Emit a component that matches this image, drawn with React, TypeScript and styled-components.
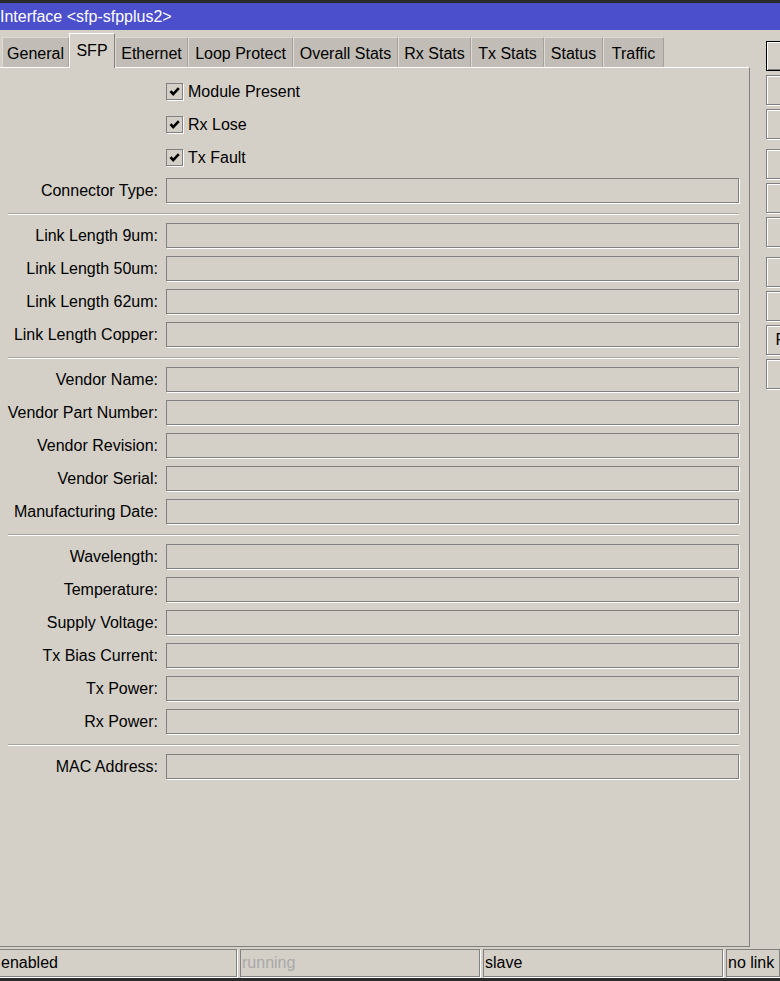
import styled, { createGlobalStyle } from 'styled-components';

const GlobalStyle = createGlobalStyle`
  html, body {
    margin: 0;
    padding: 0;
    background: #d4d0c8;
    overflow: hidden;
  }
  body {
    font-family: 'Liberation Sans', Arial, sans-serif;
    font-size: 16px;
    color: #000;
  }
`;

const tabs = [
  { name: 'General', width: 67 },
  { name: 'SFP', width: 46, active: true },
  { name: 'Ethernet', width: 73 },
  { name: 'Loop Protect', width: 105 },
  { name: 'Overall Stats', width: 105 },
  { name: 'Rx Stats', width: 73 },
  { name: 'Tx Stats', width: 73 },
  { name: 'Status', width: 59 },
  { name: 'Traffic', width: 61 },
];

const checks = ['Module Present', 'Rx Lose', 'Tx Fault'];

const sections = [
  ['Connector Type'],
  ['Link Length 9um', 'Link Length 50um', 'Link Length 62um', 'Link Length Copper'],
  ['Vendor Name', 'Vendor Part Number', 'Vendor Revision', 'Vendor Serial', 'Manufacturing Date'],
  ['Wavelength', 'Temperature', 'Supply Voltage', 'Tx Bias Current', 'Tx Power', 'Rx Power'],
  ['MAC Address'],
];

const buttonGroups = [
  ['OK', 'Cancel', 'Apply'],
  ['Disable', 'Comment', 'Torch'],
  ['Cable Test', 'Blink', 'Reset MAC Address', 'Reset Counters'],
];

const statusCells = [
  { text: 'enabled', width: 238 },
  { text: 'running', width: 240, dim: true },
  { text: 'slave', width: 240 },
  { text: 'no link' },
];

function App() {
  return (
    <Window>
      <GlobalStyle />
      <TopEdge />
      <TitleBar>Interface &lt;sfp-sfpplus2&gt;</TitleBar>
      <Body>
        <Main>
          <TabRow>
            {tabs.map((t) => (
              <Tab key={t.name} $width={t.width} $active={!!t.active}>
                {t.name}
              </Tab>
            ))}
          </TabRow>
          <Panel>
            <Form>
              {checks.map((c) => (
                <CheckRow key={c}>
                  <CheckBox>
                    <svg width="13" height="13" viewBox="0 0 13 13">
                      <path d="M2.5 6.2 L5.2 9.2 L10.8 3.2" fill="none" stroke="#000" strokeWidth="2.6" />
                    </svg>
                  </CheckBox>
                  <CheckLabel>{c}</CheckLabel>
                </CheckRow>
              ))}
              {sections.map((rows, i) => (
                <FieldGroup key={i}>
                  {i > 0 && <Separator />}
                  {rows.map((r) => (
                    <FieldRow key={r}>
                      <Label>{r}:</Label>
                      <Field />
                    </FieldRow>
                  ))}
                </FieldGroup>
              ))}
            </Form>
          </Panel>
        </Main>
        <Side>
          {buttonGroups.map((g, gi) => (
            <ButtonGroup key={gi}>
              {g.map((b, bi) => (
                <Button key={b} $default={gi === 0 && bi === 0}>
                  {b}
                </Button>
              ))}
            </ButtonGroup>
          ))}
        </Side>
      </Body>
      <StatusBar>
        {statusCells.map((s) => (
          <StatusCell key={s.text} $width={s.width} $dim={!!s.dim}>
            {s.text}
          </StatusCell>
        ))}
      </StatusBar>
      <BottomEdge />
    </Window>
  );
}

const Window = styled.div`
  width: 780px;
  height: 981px;
  display: flex;
  flex-direction: column;
  overflow: hidden;
  background: #d4d0c8;
`;

const TopEdge = styled.div`
  height: 3px;
  background: #2a2a2a;
`;

const TitleBar = styled.div`
  height: 27px;
  line-height: 27px;
  background: #4b4fcc;
  color: #fff;
  white-space: nowrap;
`;

const Body = styled.div`
  flex: 1;
  display: flex;
  min-height: 0;
`;

const Main = styled.div`
  width: 750px;
  flex: none;
  display: flex;
  flex-direction: column;
  padding-top: 3px;
  box-sizing: border-box;
`;

const TabRow = styled.div`
  height: 34px;
  display: flex;
  align-items: flex-end;
  padding-left: 2px;
`;

const Tab = styled.div<{ $width: number; $active: boolean }>`
  width: ${(p) => p.$width}px;
  flex: none;
  box-sizing: border-box;
  text-align: center;
  white-space: nowrap;
  position: relative;
  z-index: ${(p) => (p.$active ? 2 : 1)};
  height: ${(p) => (p.$active ? 35 : 30)}px;
  margin-bottom: ${(p) => (p.$active ? -1 : 0)}px;
  line-height: ${(p) => (p.$active ? 33 : 31)}px;
  background: ${(p) => (p.$active ? '#d4d0c8' : '#c1bdb6')};
  border-top: 1px solid ${(p) => (p.$active ? '#fff' : '#dedbd6')};
  border-left: 1px solid ${(p) => (p.$active ? '#fff' : '#dedbd6')};
  border-right: 1px solid ${(p) => (p.$active ? '#808080' : '#a6a29b')};
  padding-bottom: ${(p) => (p.$active ? 4 : 0)}px;
`;

const Panel = styled.div`
  flex: 1;
  border-top: 1px solid #fff;
  border-right: 1px solid #808080;
  border-bottom: 1px solid #808080;
  padding-top: 11px;
  box-sizing: border-box;
`;

const Form = styled.div`
  display: flex;
  flex-direction: column;
  gap: 8px;
`;

const CheckRow = styled.div`
  height: 25px;
  display: flex;
  align-items: center;
  padding-left: 166px;
  gap: 5px;
`;

const CheckBox = styled.div`
  width: 17px;
  height: 17px;
  box-sizing: border-box;
  border: 1px solid #808080;
  box-shadow: 1px 1px 0 #fff;
  display: flex;
  align-items: center;
  justify-content: center;
`;

const CheckLabel = styled.span`
  white-space: nowrap;
`;

const FieldGroup = styled.div`
  display: flex;
  flex-direction: column;
  gap: 8px;
`;

const Separator = styled.div`
  margin: 2px 0 0 8px;
  width: 731px;
  height: 1px;
  background: #a8a49e;
  border-bottom: 1px solid #fff;
`;

const FieldRow = styled.div`
  height: 25px;
  display: grid;
  grid-template-columns: 158px 573px;
  column-gap: 8px;
  align-items: center;
`;

const Label = styled.div`
  text-align: right;
  white-space: nowrap;
`;

const Field = styled.div`
  height: 25px;
  box-sizing: border-box;
  border: 1px solid #808080;
  box-shadow: 1px 1px 0 #fff;
  background: #d4d0c8;
`;

const Side = styled.div`
  flex: none;
  display: flex;
  flex-direction: column;
  gap: 10px;
  padding: 11px 0 0 16px;
`;

const ButtonGroup = styled.div`
  display: flex;
  flex-direction: column;
  gap: 4px;
`;

const Button = styled.div<{ $default: boolean }>`
  width: 163px;
  height: 30px;
  box-sizing: border-box;
  line-height: 28px;
  text-align: center;
  white-space: nowrap;
  border: 1px solid ${(p) => (p.$default ? '#000' : '#808080')};
  box-shadow: ${(p) =>
    p.$default ? 'inset 1px 1px 0 #fff, inset -1px -1px 0 #808080' : 'inset 1px 1px 0 #fff, 1px 1px 0 #fff'};
`;

const StatusBar = styled.div`
  height: 31px;
  display: flex;
  gap: 3px;
  padding-top: 2px;
  margin-left: -1px;
  box-sizing: border-box;
`;

const StatusCell = styled.div<{ $width?: number; $dim: boolean }>`
  ${(p) => (p.$width ? `width: ${p.$width}px; flex: none;` : 'flex: 1;')}
  height: 28px;
  box-sizing: border-box;
  border: 1px solid #808080;
  box-shadow: 1px 1px 0 #fff;
  line-height: 26px;
  padding-left: 1px;
  white-space: nowrap;
  color: ${(p) => (p.$dim ? '#a8a8a8' : '#000')};
`;

const BottomEdge = styled.div`
  height: 3px;
  background: #2a2a2a;
`;

export default App;
